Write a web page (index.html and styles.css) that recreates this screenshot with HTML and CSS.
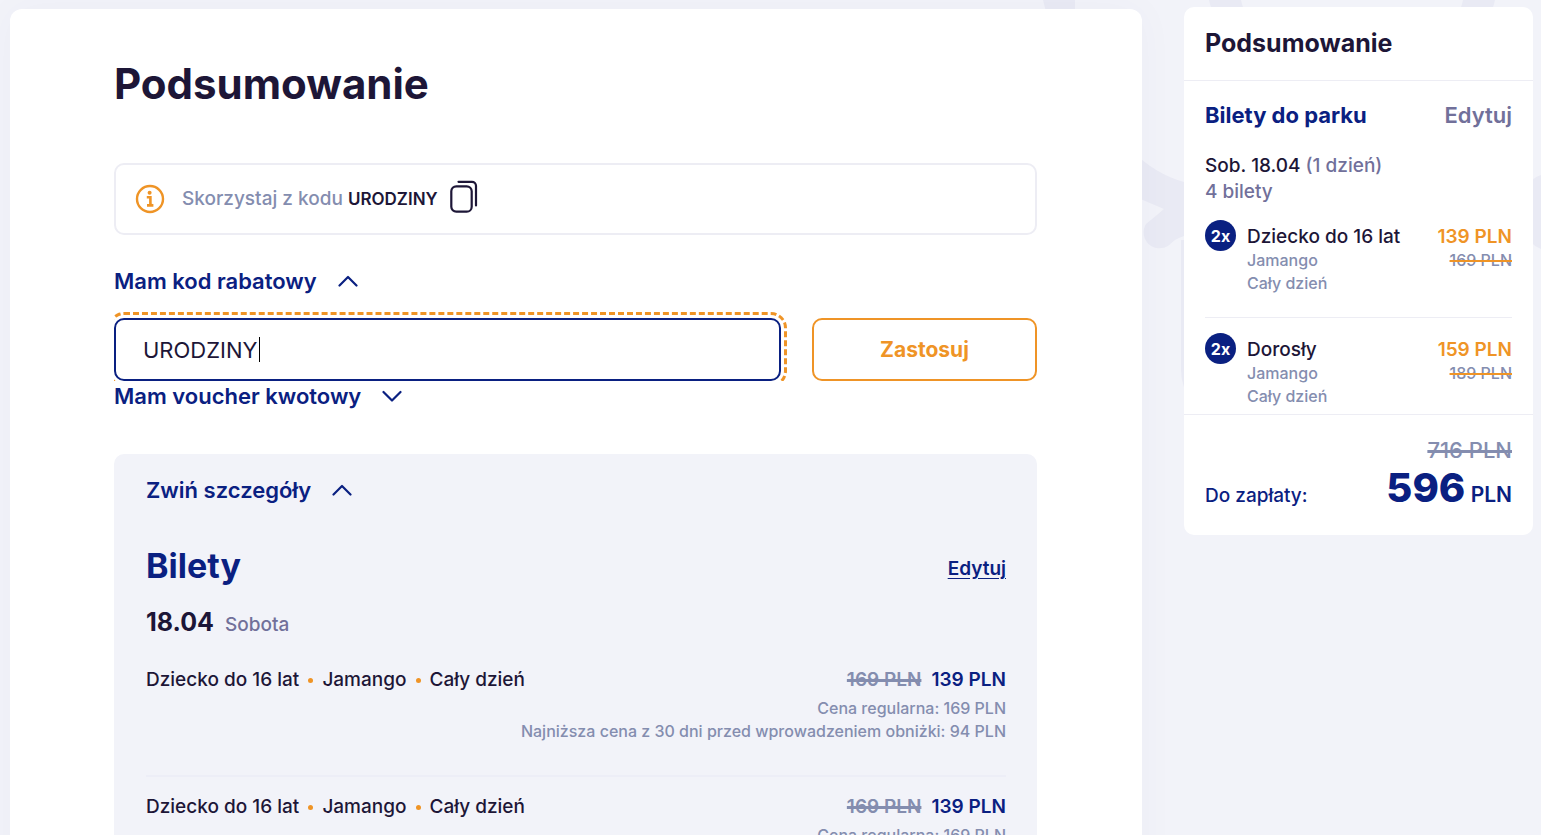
FILE: index.html
```html
<!DOCTYPE html>
<html lang="pl">
<head>
    <meta charset="UTF-8">
    <meta name="viewport" content="width=device-width, initial-scale=1.0">
    <title>Podsumowanie</title>
    <link rel="stylesheet" href="styles.css">
</head>
<body>
    <!-- Background pattern -->
    <svg class="pattern" width="520" height="420" viewBox="0 0 520 420" aria-hidden="true">
        <path d="M22 0h32v12H25zM188 0h32q2 10 8 20h-32q-6-10-8-20zM442 0h32q-2 10-8 20h-32q6-10 8-20z"/>
        <path d="M110 150q24 24 53 32v54q-8 2-16 10a16 16 0 0 1-22-22q10-8 18-15l-33-14z"/>
        <path d="M520 175q-20 6-20 36t20 38z"/>
        <path d="M160 240h10v156q-10-8-10-26z"/>
    </svg>

    <div class="page">
        <main class="card main">
            <h1>Podsumowanie</h1>

            <div class="info">
                <svg class="info-icon" width="30" height="30" viewBox="0 0 30 30" fill="none" aria-hidden="true">
                    <circle cx="15" cy="15" r="13" stroke="currentColor" stroke-width="2.4"/>
                    <circle cx="14.6" cy="8.8" r="2" fill="currentColor"/>
                    <path d="M11.8 13.2h3.6v6.600q0 1.600 2.800 1.400M12 21.400h6.400" stroke="currentColor" stroke-width="2.6"/>
                </svg>
                <p>Skorzystaj z kodu <strong>URODZINY</strong></p>
                <button type="button" class="copy" aria-label="Kopiuj kod">
                    <svg width="28" height="34" viewBox="0 0 28 34" fill="none" stroke="currentColor" stroke-width="2.2" stroke-linecap="round">
                        <rect x="1.3" y="6.3" width="20.4" height="25.4" rx="5"/>
                        <path d="M8.5 1.8H22a4 4 0 0 1 4 4V25.5"/>
                    </svg>
                </button>
            </div>

            <button type="button" class="toggle toggle-code">
                Mam kod rabatowy
                <svg width="20" height="12" viewBox="0 0 20 12" fill="none"><path d="M1.5 10.5L10 2l8.5 8.5"/></svg>
            </button>
            <form class="code-form">
                <div class="field">
                    <input type="text" id="code" value="URODZINY" aria-label="Kod rabatowy" autocomplete="off">
                    <span class="caret"></span>
                </div>
                <button type="button" class="apply">Zastosuj</button>
            </form>
            <button type="button" class="toggle">
                Mam voucher kwotowy
                <svg width="20" height="12" viewBox="0 0 20 12" fill="none"><path d="M1.5 2L10 10.5 18.5 2"/></svg>
            </button>

            <section class="details">
                <button type="button" class="toggle">
                    Zwiń szczegóły
                    <svg width="20" height="12" viewBox="0 0 20 12" fill="none"><path d="M1.5 10.5L10 2l8.5 8.5"/></svg>
                </button>
                <div class="details-head">
                    <h2>Bilety</h2>
                    <a href="#">Edytuj</a>
                </div>
                <p class="date"><strong>18.04</strong> <span>Sobota</span></p>

                <div class="ticket">
                    <div class="ticket-row">
                        <p>Dziecko do 16 lat <i></i> Jamango <i></i> Cały dzień</p>
                        <p class="price"><s>169 PLN</s> <strong>139 PLN</strong></p>
                    </div>
                    <p class="note">Cena regularna: 169 PLN</p>
                    <p class="note">Najniższa cena z 30 dni przed wprowadzeniem obniżki: 94 PLN</p>
                </div>
                <div class="ticket">
                    <div class="ticket-row">
                        <p>Dziecko do 16 lat <i></i> Jamango <i></i> Cały dzień</p>
                        <p class="price"><s>169 PLN</s> <strong>139 PLN</strong></p>
                    </div>
                    <p class="note">Cena regularna: 169 PLN</p>
                </div>
            </section>
        </main>

        <aside class="card summary">
            <h2>Podsumowanie</h2>
            <div class="summary-body">
                <div class="summary-head">
                    <h3>Bilety do parku</h3>
                    <a href="#">Edytuj</a>
                </div>
                <p class="when">Sob. 18.04 <span>(1 dzień)</span></p>
                <p class="when"><span>4 bilety</span></p>

                <div class="item">
                    <span class="count">2x</span>
                    <div class="item-name">
                        <p>Dziecko do 16 lat</p>
                        <small>Jamango</small>
                        <small>Cały dzień</small>
                    </div>
                    <div class="item-price">
                        <p>139 PLN</p>
                        <s>169 PLN</s>
                    </div>
                </div>
                <div class="item">
                    <span class="count">2x</span>
                    <div class="item-name">
                        <p>Dorosły</p>
                        <small>Jamango</small>
                        <small>Cały dzień</small>
                    </div>
                    <div class="item-price">
                        <p>159 PLN</p>
                        <s>189 PLN</s>
                    </div>
                </div>
            </div>
            <div class="total">
                <s>716 PLN</s>
                <div class="total-row">
                    <span>Do zapłaty:</span>
                    <p><strong>596</strong> PLN</p>
                </div>
            </div>
        </aside>
    </div>
</body>
</html>
```

FILE: styles.css
```css
:root {
    --navy: #0a2081;
    --ink: #1d1637;
    --orange: #ef9426;
    --grey: #848daf;
    --muted: #71709a;
    --line: #ededf4;
    --bg: #f2f3f9;
}
* {
    box-sizing: border-box;
}
body {
    margin: 0;
    background: var(--bg);
    color: var(--ink);
    font-family: Inter, "Liberation Sans", sans-serif;
    font-size: 19px;
    line-height: 24px;
    font-weight: 500;
}
h1, h2, h3, p {
    margin: 0;
}
button, input {
    font-family: inherit;
    color: inherit;
}
button {
    cursor: pointer;
}
.pattern {
    position: absolute;
    top: 0;
    right: 0;
    fill: #e9eaf4;
}
.page {
    position: relative;
    display: flex;
    align-items: flex-start;
    gap: 42px;
    height: 100vh;
    padding: 7px 8px 0 10px;
    overflow: hidden;
}
.card {
    background: #fff;
    border-radius: 10px;
}

/* Main column */
.main {
    flex: 1;
    min-width: 0;
    margin-top: 2px;
    padding: 51px 105px 60px 104px;
    border-radius: 12px;
    box-shadow: 0 0 40px rgba(10, 32, 129, 0.03);
}
h1 {
    font-size: 42px;
    line-height: 48px;
    font-weight: 700;
}
.info {
    display: flex;
    align-items: center;
    height: 72px;
    margin-top: 55px;
    padding: 0 19px;
    border: 2px solid var(--line);
    border-radius: 10px;
    color: var(--grey);
}
.info-icon {
    margin-right: 17px;
    color: var(--orange);
}
.info strong {
    font-size: 17px;
    font-weight: 600;
    color: var(--ink);
}
.copy {
    display: flex;
    margin-left: 12px;
    padding: 0 0 4px;
    border: 0;
    background: none;
    color: var(--ink);
}
.toggle {
    display: flex;
    align-items: center;
    gap: 21px;
    padding: 0;
    border: 0;
    background: none;
    color: var(--navy);
    font-size: 22px;
    line-height: 30px;
    font-weight: 600;
}
.toggle svg {
    stroke: var(--navy);
    stroke-width: 2.2;
    stroke-linecap: round;
    stroke-linejoin: round;
}
.toggle-code {
    margin-top: 31px;
}
.code-form {
    display: flex;
    gap: 25px;
    margin-top: 16px;
}
/* The focus ring is cut off at the left and bottom edge of the field */
.field {
    position: relative;
    flex: 1;
    padding: 6px 6px 0 0;
    overflow: hidden;
}
.field input {
    display: block;
    width: 100%;
    height: 63px;
    padding: 0 27px;
    border: 2px solid var(--navy);
    border-radius: 10px;
    outline: 3px dashed var(--orange);
    outline-offset: 3px;
    background: #fff;
    font-size: 22px;
    font-weight: 400;
}
.caret {
    position: absolute;
    top: 25px;
    left: 145px;
    width: 1px;
    height: 25px;
    background: #000;
}
.apply {
    width: 225px;
    height: 63px;
    margin-top: 6px;
    border: 2px solid var(--orange);
    border-radius: 10px;
    background: #fff;
    color: var(--orange);
    font-size: 21px;
    font-weight: 700;
}

/* Order details */
.details {
    margin-top: 43px;
    padding: 21px 31px 32px 32px;
    border-radius: 10px;
    background: var(--bg);
}
.details-head {
    display: flex;
    align-items: center;
    justify-content: space-between;
    margin-top: 41px;
}
.details-head h2 {
    color: var(--navy);
    font-size: 34px;
    line-height: 40px;
}
.details-head a {
    padding-top: 6px;
    color: var(--navy);
    font-weight: 600;
    text-underline-offset: 3px;
}
.date {
    display: flex;
    align-items: baseline;
    gap: 11px;
    margin-top: 24px;
    color: var(--muted);
}
.date strong {
    font-size: 25px;
    color: var(--ink);
}
.ticket {
    padding-bottom: 32px;
    border-bottom: 2px solid #edeef7;
}
.ticket:last-child {
    border: 0;
}
.date + .ticket {
    padding-top: 13px;
}
.ticket-row {
    display: flex;
    justify-content: space-between;
    padding: 18px 0 5px;
}
.ticket-row i {
    display: inline-block;
    width: 5px;
    height: 5px;
    margin: 0 4px 3px;
    border-radius: 50%;
    background: var(--orange);
}
.price s {
    margin-right: 5px;
    color: var(--grey);
    font-weight: 600;
    text-decoration-thickness: 3px;
}
.price strong {
    color: var(--navy);
    font-weight: 600;
}
.note {
    color: var(--grey);
    font-size: 16px;
    line-height: 23px;
    text-align: right;
}

/* Summary sidebar */
.summary {
    width: 349px;
    flex: none;
}
.summary h2 {
    padding: 20px 21px 21px;
    border-bottom: 1px solid var(--line);
    font-size: 25px;
    line-height: 32px;
}
.summary-body {
    padding: 22px 21px 6px;
}
.summary-head {
    display: flex;
    align-items: center;
    justify-content: space-between;
    margin-bottom: 26px;
}
.summary-head h3 {
    color: var(--navy);
    font-size: 22px;
}
.summary-head a {
    color: var(--muted);
    font-size: 22px;
    font-weight: 600;
    text-decoration: none;
}
.when {
    line-height: 26px;
}
.when span {
    color: var(--muted);
}
.item {
    display: flex;
    padding-top: 15px;
}
.item + .item {
    margin-top: 22px;
    border-top: 1px solid var(--line);
}
.count {
    display: flex;
    align-items: center;
    justify-content: center;
    width: 31px;
    height: 31px;
    margin-right: 11px;
    border-radius: 50%;
    background: var(--navy);
    color: #fff;
    font-size: 16px;
    font-weight: 700;
}
.item-name {
    flex: 1;
    padding-top: 5px;
}
.item small,
.item s {
    display: block;
    color: var(--grey);
    font-size: 16px;
    line-height: 23px;
}
.item s {
    text-decoration-color: var(--orange);
    text-decoration-thickness: 2px;
}
.item-price {
    padding-top: 5px;
    text-align: right;
}
.item-price p {
    color: var(--orange);
    font-weight: 600;
}
.total {
    padding: 23px 21px 25px;
    border-top: 1px solid var(--line);
    color: var(--navy);
}
.total > s {
    display: block;
    color: var(--grey);
    font-size: 22px;
    text-align: right;
    text-decoration-thickness: 3px;
}
.total-row {
    display: flex;
    align-items: baseline;
    justify-content: space-between;
    margin-top: 4px;
}
.total-row p {
    font-size: 21px;
    font-weight: 600;
}
.total-row strong {
    font-size: 40px;
    line-height: 44px;
    font-weight: 800;
}
```
